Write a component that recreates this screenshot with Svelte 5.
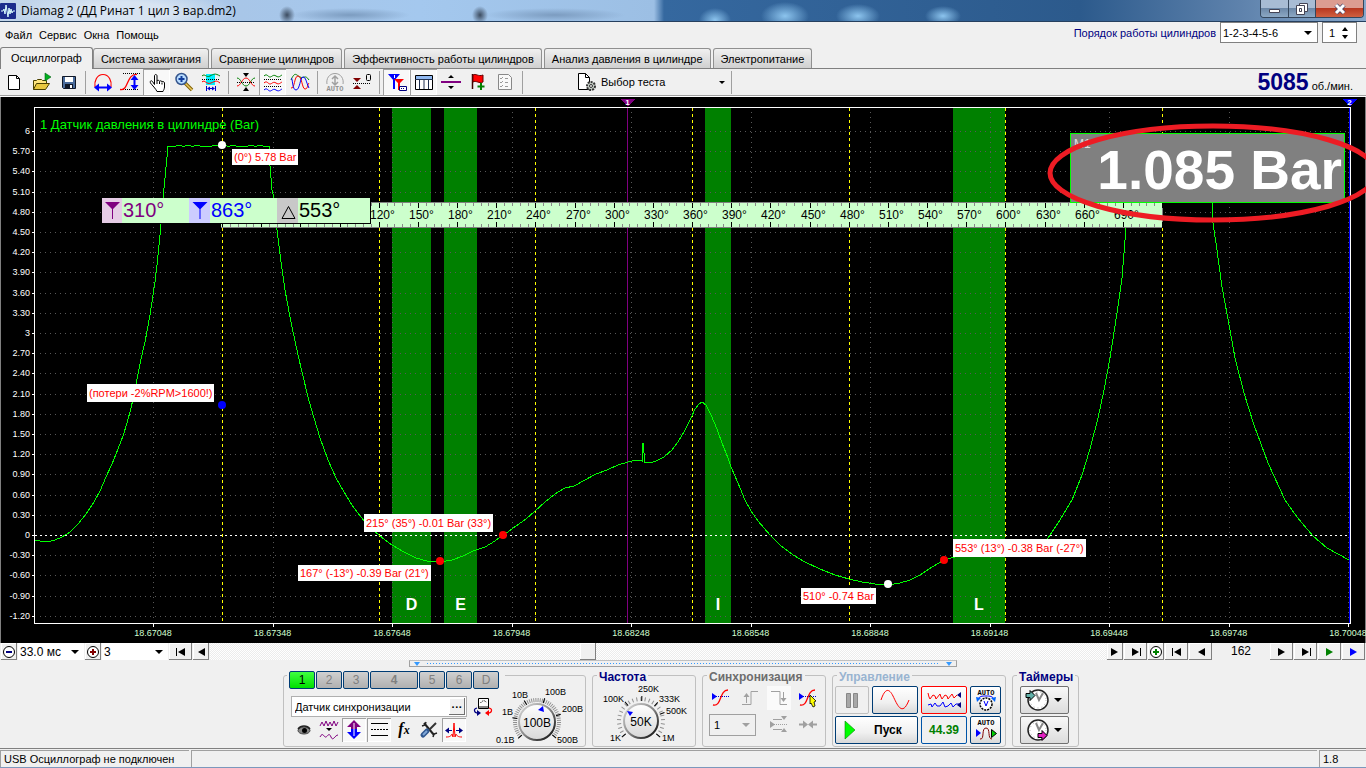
<script lang="ts">
	type Note = { x: number; y: number; text: string; tall?: boolean };

	const menu = ['Файл', 'Сервис', 'Окна', 'Помощь'];
	const tabs = [
		'Осциллограф',
		'Система зажигания',
		'Сравнение цилиндров',
		'Эффективность работы цилиндров',
		'Анализ давления в цилиндре',
		'Электропитание'
	];
	const tools = [
		['new', 'open', 'save'],
		['period', 'ramp', 'hand', 'zoom', 'measure'],
		['merge', 'split', 'overlay'],
		['auto', 'zero'],
		['cursors', 'table', 'divide', 'flag', 'checklist']
	];
	const pressed = ['hand', 'split', 'cursors', 'table', 'updown', 'levels', 'spread'];
	const channels = ['1', '2', '3', '4', '5', '6', 'D'];
	const channelTools = ['eye', 'waves', 'updown', 'levels', 'fx', 'wrench', 'spread'];

	let width = $state(1366);
	let height = $state(546);

	// x counts run 34..1349, y counts run 108..623 over the plot area
	const sx = (x: number) => 34 + ((x - 34) * (width - 51)) / 1315;
	const sy = (y: number) => 11 + ((y - 108) * (height - 31)) / 515;
	const deg = (d: number) => Math.round(sx(222 + d * 1.3056));
	const bar = (b: number) => Math.round(sy(535 - b * 67.33));

	const levels = Array.from({ length: 25 }, (_, i) => (60 - i * 3) / 10);
	const times = Array.from({ length: 11 }, (_, i) => ({
		x: 153 + i * 119.5,
		label: (18.67048 + i * 0.003).toFixed(5)
	}));
	const strokes = [0, 120, 240, 360, 480, 600, 720];
	const ticks = Array.from({ length: 121 }, (_, i) => i * 6);
	const bands = [
		{ from: 392, to: 431, name: 'D' },
		{ from: 444, to: 477, name: 'E' },
		{ from: 705, to: 731, name: 'I' },
		{ from: 953, to: 1005, name: 'L' }
	];
	const marks = [
		{ x: 222, y: 145, color: '#fff' },
		{ x: 222, y: 405, color: '#00f' },
		{ x: 440, y: 561, color: '#f00' },
		{ x: 503, y: 535, color: '#f00' },
		{ x: 888, y: 584, color: '#fff' },
		{ x: 944, y: 560, color: '#f00' }
	];
	const notes: Note[] = [
		{ x: 232, y: 149, text: '(0°) 5.78 Bar' },
		{ x: 87, y: 384, text: '(потери -2%RPM>1600!)', tall: true },
		{ x: 364, y: 514, text: '215° (35°) -0.01 Bar (33°)', tall: true },
		{ x: 298, y: 565, text: '167° (-13°) -0.39 Bar (21°)' },
		{ x: 801, y: 588, text: '510° -0.74 Bar' },
		{ x: 953, y: 539, text: '553° (13°) -0.38 Bar (-27°)', tall: true }
	];

	const rise = [
		[35, 540], [40, 541], [47, 542], [55, 540], [62, 537], [70, 532], [78, 524], [86, 514], [94, 502],
		[100, 491], [106, 477], [112, 464], [118, 449], [123, 436], [127, 423], [131, 408], [135, 390],
		[138, 374], [141, 359], [145, 342], [150, 315], [155, 282], [157, 265], [160, 235], [163, 198], [165, 178], [168, 146]
	];
	// sensor clips here, only the noise is left
	const clipped = Array.from({ length: 33 }, (_, i) => [170 + i * 3, i % 3 ? 146 : 145 + ((i * 7) % 4 ? 0 : 2)]);
	const rest = [
		[269, 146], [270, 166], [272, 190], [275, 203], [277, 230], [281, 262], [285, 290], [290, 317], [296, 346],
		[302, 372], [308, 397], [314, 418], [320, 438], [328, 460], [336, 478], [344, 492], [352, 505],
		[360, 516], [370, 527], [380, 536], [392, 545], [404, 552], [416, 558], [427, 561], [440, 562],
		[452, 560], [463, 556], [473, 551], [485, 547], [495, 541], [503, 535], [508, 532], [516, 526],
		[526, 519], [535, 511], [545, 502], [555, 494], [565, 488], [574, 486], [585, 480], [596, 474],
		[607, 470], [618, 465], [628, 462], [636, 460], [642, 461], [642, 453], [643, 443], [644, 453],
		[644, 462], [650, 463], [656, 461], [664, 457], [672, 450], [678, 442], [685, 430], [691, 418],
		[695, 409], [699, 404], [702, 402], [706, 405], [711, 415], [717, 429], [722, 443], [728, 458],
		[731, 467], [738, 483], [745, 500], [751, 511], [758, 521], [770, 535], [780, 545], [793, 555],
		[805, 562], [820, 569], [835, 575], [849, 579], [862, 582], [875, 584], [888, 585], [900, 583],
		[910, 580], [920, 575], [932, 567], [944, 560], [955, 557], [1010, 555], [1040, 547], [1048, 538],
		[1060, 520], [1072, 500], [1082, 475], [1090, 449], [1098, 418], [1104, 390], [1110, 358],
		[1117, 313], [1122, 278], [1126, 228], [1128, 203], [1132, 146], [1206, 146], [1212, 203],
		[1213, 223], [1217, 250], [1222, 287], [1230, 330], [1235, 358], [1244, 393], [1254, 425],
		[1268, 463], [1285, 500], [1297, 517], [1313, 536], [1327, 548], [1349, 560]
	];
	const trace = $derived([...rise, ...clipped, ...rest].map(([x, y]) => `${sx(x)},${sy(y)}`).join(' '));

	const spokes = (count: number, from: number, to: number) =>
		Array.from({ length: count }, (_, i) => from + ((to - from) * i) / (count - 1));
</script>

{#snippet icon(name: string)}
	<svg class="icon" viewBox="0 0 20 20" fill="none" aria-hidden="true">
		{#if name === 'new'}
			<path d="M4.5 3.5h8l3 3v11h-11z" fill="#fff" stroke="#000" />
			<path d="M12.5 3.5v3h3" stroke="#000" />
		{:else if name === 'open'}
			<path d="M2.5 17.5v-9h3l1-1h4l1 1h4v3" fill="#ffe680" stroke="#4a4000" />
			<path d="M2.5 17.5l3-6h13l-4 6z" fill="#e8c840" stroke="#4a4000" />
			<path d="M14 1l6 4-6 4z" fill="#00b020" stroke="#006010" stroke-width=".6" />
		{:else if name === 'save'}
			<path d="M4.5 4.5h13v12h-12l-1-1z" fill="#4a6c9c" stroke="#101828" />
			<path d="M7 5h8v5H7z" fill="#fff" />
			<path d="M7 12h8v4H7z" fill="#101828" />
			<path d="M12 13h2v3h-2z" fill="#fff" />
		{:else if name === 'period'}
			<path d="M2 15C1 9 4 2.5 10 2.5S19 9 18 15" stroke="#f00" stroke-width="1.2" />
			<path d="M4 15.5h12" stroke="#00f" stroke-width="2" />
			<path d="M1 15.5l5-4v8zM19 15.5l-5-4v8z" fill="#00f" />
		{:else if name === 'ramp'}
			<path d="M3 1.5h17M1 17.5h17" stroke="#000" stroke-dasharray="1 1" />
			<path d="M0 17.5c9 2 6-16 17-15" stroke="#f00" stroke-width="1.3" />
			<path d="M14.5 6v9" stroke="#00f" stroke-width="2" />
			<path d="M14.5 3l4 5h-8zM14.5 18l4-5h-8z" fill="#00f" />
		{:else if name === 'hand'}
			<path
				d="M7.5 12.5V4c0-2 2.5-2 2.5 0v5c0-1 2.5-1 2.5.5 0-1 2.5-1 2.5.5 0-1 2.5-.5 2.5 1v4c0 2-1 3-1.5 4.5h-6C9 17 5 13 3.5 11c-1-2 1-3 2-1.5z"
				fill="#fff"
				stroke="#000"
			/>
			<path d="M10 9v3M12.5 10v2M15 10.5v2" stroke="#000" />
		{:else if name === 'zoom'}
			<path d="M11 11l7 7" stroke="#806000" stroke-width="3.5" />
			<path d="M11 11l7 7" stroke="#e8c860" stroke-width="1.5" />
			<circle cx="7.5" cy="7" r="5.5" fill="#b8dcff" stroke="#34548c" stroke-width="1.5" />
			<path d="M7.5 4v6M4.5 7h6" stroke="#103c9c" stroke-width="2" />
		{:else if name === 'measure'}
			<path d="M5 2h9v11H5z" fill="#00f0ff" />
			<path d="M1 4c3-3 4 2 8 0s5-3 10 0" stroke="#008000" />
			<path d="M1 7.5h18" stroke="#000" stroke-dasharray="1 1" />
			<path d="M1 10c3-3 4 3 9 1s5-3 9 0" stroke="#f00" />
			<path d="M5.5 14v5M14.5 14v5M7 16.5h6" stroke="#00c" />
			<path d="M6 16.5l3-2v4zM14 16.5l-3-2v4z" fill="#00c" />
		{:else if name === 'merge'}
			<path d="M10 5L7 1h6zM10 15l-3 4h6z" fill="#000" />
			<path d="M1 6c4 0 5 8 9 8s5-8 9-8" stroke="#008000" />
			<path d="M1 14c4 0 5-8 9-8s5 8 9 8" stroke="#f00" />
			<path d="M1 10.5h18" stroke="#000" stroke-dasharray="1 1" />
		{:else if name === 'split'}
			<path d="M1 4c3-3 4 1 6 1s3-3 6-1 4 0 6-1" stroke="#008000" />
			<path d="M1 11c3-3 4 1 6 1s3-3 6-1 4 0 6-1" stroke="#f00" />
			<path d="M1 18c3-3 4 1 6 1s3-3 6-1 4 0 6-1" stroke="#00f" />
			<path d="M1 7.5h18M1 14.5h18" stroke="#000" stroke-dasharray="1 1" />
		{:else if name === 'overlay'}
			<path d="M1 8c4-9 5-5 9-3s5-3 9 3" stroke="#008000" />
			<path d="M1 16C5 17 4 4 8 4s4 13 7 13 2-4 4-6" stroke="#f00" />
			<path d="M1 6c2 0 1 12 5 12s4-13 7-13 3 5 6 11" stroke="#00f" />
		{:else if name === 'auto'}
			<path d="M2 12C1 7 4 1.5 10 1.5S19 7 18 12" stroke="#a0a0a0" />
			<path d="M10 12V4M7 7l3-3 3 3M7 10l3 3 3-3" stroke="#a0a0a0" stroke-width="1.5" />
			<text x="10" y="19" class="tiny" fill="#909090">AUTO</text>
		{:else if name === 'zero'}
			<path d="M5 10L1 6h8zM5 13l-4 4h8z" fill="#800000" />
			<path d="M1 11.5h18" stroke="#000" stroke-dasharray="1 1" />
			<rect x="14.5" y="2.5" width="4" height="6" rx="1" stroke="#000" />
		{:else if name === 'cursors'}
			<path d="M1 2h12l-6 7zM6 8h2v9H6z" fill="#00f" />
			<path d="M7 7h10l-5 5zM11 10h2v8h-2z" fill="#f00" />
			<path d="M7.5 3v3" stroke="#fff" />
			<path d="M12.5 14.5h7v4h-7z" fill="#fff" stroke="#000080" />
			<path d="M14 16.5h4" stroke="#000080" stroke-dasharray="1 1" />
		{:else if name === 'table'}
			<path d="M1.5 3.5h17v14h-17z" fill="#fff" stroke="#000" />
			<path d="M2 4h16v3H2z" fill="#90b8f0" />
			<path d="M1 7.5h18M5.5 7v10M10 7v10M14.5 7v10" stroke="#203050" />
		{:else if name === 'divide'}
			<path d="M0 9h20v2H0z" fill="#800080" />
			<path d="M10 3l3 3H7zM10 17l3-3H7z" fill="#000" />
		{:else if name === 'flag'}
			<path d="M4.5 2v15" stroke="#400000" stroke-width="1.5" />
			<path d="M5 3c3-2 5 2 10 0v7c-4 2-7-2-10 0z" fill="#f00" stroke="#600" />
			<path d="M13 11v7M9.5 14.5h7" stroke="#008000" stroke-width="2" />
		{:else if name === 'checklist'}
			<path d="M3.5 2.5h10l3 3v12h-13z" fill="#f8f8f8" stroke="#888" />
			<path d="M5 6l1 1 2-2M5 10l1 1 2-2M5 14l1 1 2-2M10 6.5h3M10 10.5h3M10 14.5h3" stroke="#999" />
		{:else if name === 'test'}
			<path d="M2.5 1.5h7l4 4v12h-11z" fill="#fff" stroke="#000" />
			<path d="M9.5 1.5v4h4" stroke="#000" />
			<circle cx="15" cy="14" r="4" fill="#c8d0c8" stroke="#333" stroke-width="2" stroke-dasharray="2 1" />
			<circle cx="15" cy="14" r="1.5" fill="#f0f0f0" stroke="#333" />
		{:else if name === 'eye'}
			<ellipse cx="10" cy="10.5" rx="6" ry="3.5" fill="#888" stroke="#444" />
			<path d="M4 9c3-4 9-4 12 0" stroke="#222" stroke-width="1.5" />
			<circle cx="10.5" cy="10.5" r="2.5" fill="#000" />
		{:else if name === 'waves'}
			<path d="M1 6l2-4 2 4 2-5 2 5 2-4 2 4 2-5 2 5 2-4" stroke="#800080" />
			<path d="M10 11L7 8h6z" fill="#000" />
			<path d="M1 17c3-6 4 1 6 0s3-5 5 0 4-2 7-2" stroke="#800080" />
		{:else if name === 'updown'}
			<path d="M10 0l7 7h-4v3H7V7H3z" fill="#800080" />
			<path d="M10 19l7-7h-4V9H7v3H3z" fill="#00f" />
			<path d="M10 3v13" stroke="#fff" />
		{:else if name === 'levels'}
			<path d="M2 3.5h17M2 15.5h17" stroke="#000" />
			<path d="M2 9.5h17" stroke="#000" stroke-dasharray="2 1" />
		{:else if name === 'fx'}
			<text x="10" y="14" class="fx">f<tspan class="sub">x</tspan></text>
		{:else if name === 'wrench'}
			<path d="M5 3l10 12" stroke="#222" stroke-width="2" />
			<path d="M3 6l3-1 1-3M14 17l1-3 3-1" stroke="#222" stroke-width="1.5" />
			<path d="M17 3l-7 7" stroke="#333" stroke-width="2" />
			<path d="M8 11l-4 4" stroke="#305890" stroke-width="5" stroke-linecap="round" />
			<path d="M8 11l-4 4" stroke="#80a8d8" stroke-width="2" />
		{:else if name === 'spread'}
			<path d="M2 17c4 0 5-1 6-3l1 3 1-14 1 14 1-3c1 2 2 3 6 3" stroke="#f00" />
			<path d="M1 10.5l4-3v6zM19 10.5l-4-3v6z" fill="#000080" />
			<path d="M4 10.5h4M12 10.5h4" stroke="#000080" />
		{:else if name === 'swap'}
			<path d="M5.5 1.5h10v10h-10z" fill="#fff" stroke="#000" />
			<path d="M6 9h9v2H6z" fill="#888" />
			<path d="M7.5 6c2-3 5-3 6 0" stroke="#000" stroke-dasharray="1 1" />
			<path d="M4 11c-4 1-3 5 1 5" stroke="#000080" stroke-width="1.2" />
			<path d="M16 11c4 1 3 5-1 5" stroke="#f00" stroke-width="1.2" />
			<path d="M8 16l-4-3v6z" fill="#000080" />
			<path d="M12 16l4-3v6z" fill="#f00" />
		{:else if name === 'sync-level' || name === 'sync-pick'}
			<path d="M1 5l5 3.5-5 3.5z" fill="#00f" />
			<path d="M5 8.5h14" stroke="#00c" stroke-dasharray="1 1" />
			<path d="M2 17c9 2 6-15 15-15" stroke="#f00" stroke-width="1.3" />
			{#if name === 'sync-pick'}
				<path d="M12 7l6 6-2 1 1 4-2 1-2-4-1 1z" fill="#ff0" stroke="#000" stroke-width=".8" />
			{/if}
		{:else if name === 'edge-up'}
			<path d="M2 16.5h9v-13h7M6.5 15V7" stroke="#a0a0a0" />
			<path d="M6.5 5l3 4h-6z" fill="#a0a0a0" />
		{:else if name === 'edge-down'}
			<path d="M2 3.5h9v13h7M14.5 4v7" stroke="#a0a0a0" />
			<path d="M14.5 14l3-4h-6z" fill="#a0a0a0" />
		{:else if name === 'sync-window'}
			<path d="M1 6l5 3.5L1 13z" fill="#a0a0a0" />
			<path d="M4 4.5h9M4 14.5h9" stroke="#a0a0a0" />
			<path d="M5 9.5h13" stroke="#a0a0a0" stroke-dasharray="1 1" />
			<path d="M15 5l-3-4h6zM15 13l-3 4h6z" fill="#a0a0a0" />
		{:else if name === 'squeeze'}
			<path d="M10 9.5l-5-4v8zM10 9.5l5-4v8z" fill="#a0a0a0" />
			<path d="M1 9.5h6M13 9.5h6" stroke="#a0a0a0" stroke-width="2" />
		{/if}
	</svg>
{/snippet}

{#snippet arrow(dir: number, bar: boolean, color: string)}
	<svg class="arrow" viewBox="0 0 14 10" fill={color} aria-hidden="true">
		<g transform={dir < 0 ? 'translate(14 0) scale(-1 1)' : undefined}>
			<path d="M3 1l7 4-7 4z" />
			{#if bar}<path d="M11 1h1v8h-1z" />{/if}
		</g>
	</svg>
{/snippet}

{#snippet caret()}
	<svg class="caret" viewBox="0 0 8 4" aria-hidden="true"><path d="M0 0h8L4 4z" fill="currentColor" /></svg>
{/snippet}

{#snippet sign(plus: boolean, color: string)}
	<svg class="sign" viewBox="0 0 14 14" fill="none" aria-hidden="true">
		<circle cx="7" cy="7" r="5.5" fill="#fff" stroke="#000" />
		<path d={plus ? 'M4 7h6M7 4v6' : 'M4 7h6'} stroke={color} stroke-width="2" />
	</svg>
{/snippet}

<div class="window">
	<header class="titlebar">
		<svg class="logo" viewBox="0 0 16 16" aria-hidden="true">
			<rect width="16" height="16" rx="1" fill="#1c2c8c" />
			<path d="M1 8h2l1-2 1 5 1-9 2 12 1-9 1 6 1-5 1 4 1-2h2" fill="none" stroke="#dff" />
		</svg>
		<h1>Diamag 2 (ДД Ринат 1 цил 3 вар.dm2)</h1>
		<div class="sysbuttons">
			<button class="min" aria-label="Свернуть"><svg viewBox="0 0 16 12"><path d="M2.5 6.5h10v3h-10z" fill="#fff" stroke="#445" /></svg></button>
			<button class="max" aria-label="Развернуть">
				<svg viewBox="0 0 16 12" fill="#fff" stroke="#445"><path d="M5.5.5h8v8h-8z" /><path d="M2.5 2.5h8v9h-8zM5.5 5.5h2v3h-2z" fill-rule="evenodd" /></svg>
			</button>
			<button class="close" aria-label="Закрыть"><svg viewBox="0 0 16 12"><path d="M4 2l8 8M12 2l-8 8" stroke="#446" stroke-width="4.5" /><path d="M4 2l8 8M12 2l-8 8" stroke="#fff" stroke-width="3" /></svg></button>
		</div>
	</header>

	<div class="menubar">
		<nav>
			{#each menu as item (item)}
				<a href="#menu">{item}</a>
			{/each}
		</nav>
		<div class="order">
			<label for="order">Порядок работы цилиндров</label>
			<span class="combo order-combo">
				<select id="order"><option>1-2-3-4-5-6</option></select>
				{@render caret()}
			</span>
			<span class="spin">
				<input aria-label="Цилиндр" value="1" />
				<svg viewBox="0 0 8 14" aria-hidden="true"><path d="M1 5l3-4 3 4zM1 9l3 4 3-4z" /></svg>
			</span>
		</div>
	</div>

	<div class="tabs" role="tablist">
		{#each tabs as tab, i (tab)}
			<button role="tab" class:active={i === 0} aria-selected={i === 0}>{tab}</button>
		{/each}
	</div>

	<div class="toolbar">
		{#each tools as group, i (i)}
			<div class="tool-group">
				{#each group as tool (tool)}
					<button class="tool" class:pressed={pressed.includes(tool)} aria-label={tool}>
						{@render icon(tool)}
					</button>
				{/each}
			</div>
		{/each}
		<button class="test">
			{@render icon('test')}
			<span>Выбор теста</span>
			{@render caret()}
		</button>
		<output class="rpm"><b>5085</b>об./мин.</output>
	</div>

	<main class="scope" bind:clientWidth={width} bind:clientHeight={height}>
		<svg class="plot" {width} {height} shape-rendering="crispEdges">
			{#each bands as band (band.name)}
				<rect x={sx(band.from)} y="11" width={sx(band.to) - sx(band.from)} height={height - 31} fill="#008000" />
			{/each}

			<g stroke="#585858" stroke-dasharray="1 4">
				{#each levels as level (level)}
					<path d="M40 {bar(level) + 0.5}H{width - 18}" />
				{/each}
				{#each times as time (time.x)}
					<path d="M{Math.round(sx(time.x)) + 0.5} 15V{height - 21}" />
				{/each}
			</g>

			<g stroke="#ff0" stroke-dasharray="3 3">
				{#each strokes as stroke (stroke)}
					<path d="M{deg(stroke) + 0.5} 11V{height - 20}" />
				{/each}
			</g>
			<path d="M35 {bar(0) + 0.5}H{width - 17}" stroke="#fff" stroke-dasharray="2 3" />

			<path d="M{deg(310) + 0.5} 10V{height - 20}" stroke="#800080" />
			<path d="M{width - 16.5} 10V{height - 20}" stroke="#00f" />

			<polyline points={trace} fill="none" stroke="#0f0" />

			<path d="M34.5 {height - 19.5}V10.5H{width - 15.5}V{height - 19.5}H34" fill="none" stroke="#fff" />
			<path d="M0.5 0V{height}M{width - 0.5} 0V{height}" stroke="#808080" />

			{#each levels as level (level)}
				<path d="M32 {bar(level) + 0.5}h3" stroke="#fff" />
				<text class="scale" x="30" y={bar(level) + 3} text-anchor="end">
					{Number.isInteger(level) && level % 3 === 0 ? level : level.toFixed(2)}
				</text>
			{/each}
			{#each times as time (time.x)}
				<path d="M{Math.round(sx(time.x)) + 0.5} {height - 19}v3" stroke="#fff" />
				<text class="scale time" x={sx(time.x)} y={height - 7} text-anchor="middle">{time.label}</text>
			{/each}
			{#each bands as band (band.name)}
				<text class="band" x={(sx(band.from) + sx(band.to)) / 2} y={height - 33} text-anchor="middle">{band.name}</text>
			{/each}
			<text class="channel" x="40" y="32">1 Датчик давления в цилиндре (Bar)</text>

			<path d="M{deg(310) - 7} 2h15l-7 7z" fill="#800080" />
			<text class="flag" x={deg(310) + 0.5} y="8" text-anchor="middle">1</text>
			<path d="M{width - 24} 2h15l-7 7z" fill="#00f" />
			<text class="flag" x={width - 16.5} y="8" text-anchor="middle">2</text>

			<rect x={deg(0) - 1} y="105" width={deg(720) - deg(0) + 1} height="25" fill="#cfc" />
			<path d="M{deg(0) - 1} 105.5H{deg(720)}V130M{deg(0) - 1} 130.5H{deg(720)}" fill="none" stroke="#808080" />
			{#each ticks as tick (tick)}
				{#if tick % 30 === 0}
					<path d="M{deg(tick) + 0.5} 106v5m0 14v5" stroke="#000" />
				{:else}
					<path d="M{deg(tick) + 0.5} 106v3m0 18v3" stroke="#888" />
				{/if}
				{#if tick % 30 === 0 && tick >= 120 && tick < 720}
					<text class="degree" x={deg(tick) - 9} y="122">{tick}°</text>
				{/if}
			{/each}

			{#each marks as mark (mark)}
				<circle cx={sx(mark.x)} cy={sy(mark.y)} r="4" fill={mark.color} shape-rendering="auto" />
			{/each}
		</svg>

		{#each notes as note (note.text)}
			<span class="note" class:tall={note.tall} style="left: {sx(note.x)}px; top: {sy(note.y)}px">{note.text}</span>
		{/each}

		<div class="readout">
			<svg class="violet" viewBox="0 0 20 25"><path d="M3 4h15l-7 7v10h-1V11z" fill="#800080" /></svg>
			<span class="violet-text">310°</span>
			<svg class="blue" viewBox="0 0 20 25"><path d="M3 4h15l-7 7v10h-1V11z" fill="#00f" /></svg>
			<span class="blue-text">863°</span>
			<svg class="gray" viewBox="0 0 20 25"><path d="M4.5 20.5h13l-6.5-12z" fill="none" stroke="#000" /></svg>
			<span>553°</span>
		</div>

		<div class="meter">
			<small>M1</small>
			<strong>1.085 Bar</strong>
		</div>
		<svg class="circled" viewBox="0 0 320 104" aria-hidden="true">
			<ellipse cx="167" cy="51" rx="163" ry="47" fill="none" stroke="#ed1c24" stroke-width="5" />
		</svg>
	</main>

	<div class="transport">
		<button class="step" aria-label="Уменьшить">{@render sign(false, '#000080')}</button>
		<span class="combo flat"><select aria-label="Развёртка"><option>33.0 мс</option></select>{@render caret()}</span>
		<button class="step" aria-label="Увеличить">{@render sign(true, '#800000')}</button>
		<span class="combo flat"><select aria-label="Масштаб"><option>3</option></select>{@render caret()}</span>
		<button class="skip" aria-label="В начало">{@render arrow(-1, true, '#000')}</button>
		<button class="step" aria-label="Назад">{@render arrow(-1, false, '#000')}</button>
		<input class="scroll" type="range" min="0" max="1000" value="420" aria-label="Прокрутка" />
		<button class="step" aria-label="Вперёд">{@render arrow(1, false, '#000')}</button>
		<button class="skip" aria-label="В конец">{@render arrow(1, true, '#000')}</button>
		<button class="step" aria-label="Добавить">{@render sign(true, '#008000')}</button>
		<button class="skip" aria-label="Первый кадр">{@render arrow(-1, true, '#000')}</button>
		<button class="skip" aria-label="Предыдущий кадр">{@render arrow(-1, false, '#000')}</button>
		<output class="frame">162</output>
		<button class="skip" aria-label="Следующий кадр">{@render arrow(1, false, '#000')}</button>
		<button class="skip" aria-label="Последний кадр">{@render arrow(1, true, '#000')}</button>
		<button class="skip" aria-label="Воспроизвести">{@render arrow(1, false, '#008000')}</button>
		<button class="skip" aria-label="Воспроизвести всё">{@render arrow(1, false, '#00f')}</button>
	</div>

	<div class="splitter"><i></i><span></span><i></i></div>

	<div class="panel">
		<section class="box channel-box">
			<div class="channels">
				{#each channels as channel, i (channel)}
					<button class:on={i === 0} class:wide={channel === '4'}>{channel}</button>
				{/each}
			</div>
			<div class="channel-body">
				<div class="channel-left">
					<div class="sensor">
						<span class="field">
							<input aria-label="Датчик" value="Датчик синхронизации" />
							<button aria-label="Выбрать датчик">···</button>
						</span>
						<button class="small" aria-label="swap">{@render icon('swap')}</button>
					</div>
					<div class="channel-tools">
						{#each channelTools as tool (tool)}
							<button class="small" class:pressed={pressed.includes(tool)} aria-label={tool}>{@render icon(tool)}</button>
						{/each}
					</div>
				</div>
				<label class="knob">
					<svg viewBox="0 0 90 66" aria-hidden="true">
						<g transform="translate(42 37)">
							{#each spokes(48, -220, 40) as a (a)}
								<path transform="rotate({a})" d="M20 0h4" stroke="#909090" />
							{/each}
							{#each [-221, -170, -121, -72, -18, 40] as a (a)}
								<path transform="rotate({a})" d="M20 0h5" stroke="#000" />
							{/each}
							<circle r="18" fill="url(#dial)" stroke="url(#rim)" stroke-width="2" />
							<path d="M1-12l5-4 1 6z" fill="#00f" />
							<text class="value" y="5">100B</text>
						</g>
						<text x="17" y="13">10B</text>
						<text x="50" y="10">100B</text>
						<text x="67" y="27">200B</text>
						<text x="62" y="58">500B</text>
						<text x="1" y="58">0.1B</text>
						<text x="7" y="30">1B</text>
					</svg>
					<input type="range" min="0" max="5" value="3" aria-label="Чувствительность" />
				</label>
			</div>
		</section>

		<section class="box freq-box">
			<h2>Частота</h2>
			<label class="knob">
				<svg viewBox="0 0 90 66" aria-hidden="true">
					<defs>
						<linearGradient id="dial" x2="0" y2="1"><stop stop-color="#fff" /><stop offset="1" stop-color="#d8d8d8" /></linearGradient>
						<linearGradient id="rim" x2="1" y2="1"><stop stop-color="#ddd" /><stop offset=".5" stop-color="#888" /><stop offset="1" stop-color="#000" /></linearGradient>
					</defs>
					<g transform="translate(43 41)">
						{#each spokes(25, -220, 40) as a (a)}
							<path transform="rotate({a})" d="M20 0h4" stroke="#909090" />
						{/each}
						{#each [-220, -130, -88, -48, -20, 40] as a (a)}
							<path transform="rotate({a})" d="M20 0h5" stroke="#000" />
						{/each}
						<circle r="17" fill="url(#dial)" stroke="url(#rim)" stroke-width="2" />
						<path d="M-14-10l6 1-3 4z" fill="#00f" />
						<text class="value" y="5">50K</text>
					</g>
					<text x="40" y="12">250K</text>
					<text x="5" y="22">100K</text>
					<text x="61" y="22">333K</text>
					<text x="68" y="34">500K</text>
					<text x="12" y="61">1K</text>
					<text x="64" y="61">1M</text>
				</svg>
				<input type="range" min="0" max="6" value="1" aria-label="Частота" />
			</label>
		</section>

		<section class="box sync-box">
			<h2>Синхронизация</h2>
			<div class="sync-grid">
				<button class="small" aria-label="Уровень">{@render icon('sync-level')}</button>
				<button class="small" aria-label="По фронту">{@render icon('edge-up')}</button>
				<button class="small lit" aria-label="По спаду">{@render icon('edge-down')}</button>
				<button class="small" aria-label="Выбор уровня">{@render icon('sync-pick')}</button>
				<span class="combo sync-combo">
					<select aria-label="Канал синхронизации"><option>1</option></select>
					{@render caret()}
				</span>
				<button class="small" aria-label="Окно">{@render icon('sync-window')}</button>
				<button class="small" aria-label="Сжать">{@render icon('squeeze')}</button>
			</div>
		</section>

		<section class="box control-box">
			<h2>Управление</h2>
			<div class="control-grid">
				<button class="big muted" aria-label="Пауза">
					<svg viewBox="0 0 20 20"><path d="M4.5 3.5h4v14h-4zM11.5 3.5h4v14h-4z" fill="#a8a8a8" stroke="#888" /></svg>
				</button>
				<button class="big" aria-label="Синус">
					<svg class="long" viewBox="0 0 36 22" fill="none"><path d="M4 11C8-1 12-1 16 7s9 22 16 4" stroke="#f00" /></svg>
				</button>
				<button class="big red" aria-label="Осциллограммы">
					<svg class="long" viewBox="0 0 36 22" fill="none">
						<path d="M2 4l1 4 1 2 3-4 2 1 1 3 4-5 1 3 1 2 3-4 2 1 1 3 4-5 2 4 3-3" stroke="#f00" />
						<path d="M2 16l3-1 1 3 3-4 2 3 3 0 3-4 2 5 3-1 3-3 2 4 3-3h3" stroke="#00f" />
						<path d="M35 3v6l-4-3zM35 13v6l-4-3z" fill="#000080" />
					</svg>
				</button>
				<button class="big" aria-label="Автовольт">
					<svg class="square" viewBox="0 0 26 26" fill="none">
						<text x="13" y="8" class="tiny dark">AUTO</text>
						<path d="M5 13c1-4 4-4 8-4s7 0 8 4" stroke="#00f" />
						<circle cx="13" cy="17" r="6" fill="#fff" stroke="#000" stroke-width="1.5" stroke-dasharray="2 1" />
						<path d="M11 14l2 5 2-5" stroke="#00f" />
						<path d="M3 10l5 1-4 4zM23 10l-5 1 4 4z" fill="#06f" />
					</svg>
				</button>
				<button class="big start">
					<svg viewBox="0 0 20 20"><path d="M5 1l10 9-10 9z" fill="#0f0" stroke="#080" stroke-width=".6" /></svg>
					<span>Пуск</span>
				</button>
				<output class="big load">44.39</output>
				<button class="big" aria-label="Автосинхронизация">
					<svg class="square" viewBox="0 0 26 26" fill="none">
						<text x="13" y="8" class="tiny dark">AUTO</text>
						<path d="M7 22c5 1 1-11 6-11s1 11 6 11" stroke="#800000" />
						<path d="M3 12l5 4-5 4z" fill="#00f" />
						<path d="M18.5 12.5l5 4-5 4z" fill="#0c0" stroke="#000" />
					</svg>
				</button>
			</div>
		</section>

		<section class="box timer-box">
			<h2>Таймеры</h2>
			{#each ['#60b0a8', '#e020c0'] as color, i (color)}
				<button class="timer" aria-label="Таймер {i + 1}">
					<svg viewBox="0 0 26 24" aria-hidden="true">
						<circle cx="13" cy="12" r="10" fill="#fff" stroke="#222" stroke-width="1.5" />
						<circle cx="13" cy="12" r="8" fill="none" stroke="#aaa" stroke-dasharray="1 3" />
						<path d="M11 5l3 7 4-7" fill="none" stroke="#888" stroke-width="2" />
						<path transform={i ? 'translate(12 11)' : 'translate(0 1)'} d="M1 4.5h4v-3l5 5-5 5v-3H1z" fill={color} stroke="#000" />
					</svg>
					{@render caret()}
				</button>
			{/each}
		</section>
	</div>

	<footer class="status">
		<span class="message">USB Осциллограф не подключен</span>
		<span class="filler"></span>
		<span class="version">1.8</span>
	</footer>
</div>

<style>
	:global(body) {
		background: #f0f0f0;
	}

	.window {
		display: flex;
		flex-direction: column;
		min-height: 100vh;
		font: 11px/14px 'Liberation Sans', Arial, sans-serif;
		color: #000;
	}

	button,
	select,
	input {
		margin: 0;
		padding: 0;
		border: 0;
		border-radius: 0;
		background: none;
		font: inherit;
		color: inherit;
	}

	h1,
	h2 {
		margin: 0;
		font: inherit;
	}

	.icon {
		display: block;
		width: 20px;
		height: 20px;
	}

	.tiny {
		font: bold 7px 'Liberation Mono', monospace;
		text-anchor: middle;
	}

	.dark {
		fill: #000;
	}

	.fx {
		font: italic bold 16px 'Liberation Serif', serif;
		text-anchor: middle;
		fill: #000;
	}

	.sub {
		font-size: 12px;
	}

	.titlebar {
		display: flex;
		align-items: center;
		height: 21px;
		border-bottom: 1px solid #26405f;
		background:
			radial-gradient(ellipse 110px 24px at 125px 12px, #d8e4f2 40%, transparent 100%),
			radial-gradient(ellipse 16px 12px at 715px 20px, #8cc4ee, transparent),
			radial-gradient(ellipse 24px 14px at 785px 16px, #8cc4ee, transparent),
			radial-gradient(ellipse 22px 12px at 858px 16px, #8cc4ee, transparent),
			radial-gradient(ellipse 18px 10px at 943px 16px, #8cc4ee, transparent),
			radial-gradient(ellipse 8px 9px at 287px 15px, #3c4c60, transparent),
			radial-gradient(ellipse 60px 7px at 350px 15px, #7c9cc0, transparent),
			radial-gradient(ellipse 8px 9px at 480px 15px, #3c4c60, transparent),
			radial-gradient(ellipse 70px 7px at 555px 15px, #7c9cc0, transparent),
			linear-gradient(90deg, #c2d5ea 0, #a8c6e8 240px, #a4c8ee 420px, #9cbfe4 654px, #35689f 664px, #2c5a8c 1080px, #5e82ac 1240px, #88a8cc);
	}

	.logo {
		width: 16px;
		height: 16px;
	}

	.titlebar h1 {
		flex: 1;
		margin-left: 5px;
		font: 12px/16px 'Noto Sans', 'Open Sans', sans-serif;
		font-family: 'Open Sans', sans-serif;
	}

	.sysbuttons {
		display: flex;
		align-self: flex-start;
		margin-right: 2px;
		border: 1px solid #34465c;
		border-top: 0;
		border-radius: 0 0 4px 4px;
		overflow: hidden;
	}

	.sysbuttons button {
		display: grid;
		place-items: center;
		width: 28px;
		height: 17px;
		border-right: 1px solid #34465c;
		background: linear-gradient(#a8bcd4 45%, #6c88a8 50%, #8ca8c4);
	}

	.sysbuttons .max {
		width: 27px;
	}

	.sysbuttons .close {
		width: 47px;
		border-right: 0;
		background: linear-gradient(#dc9c90 45%, #b83820 50%, #d06040);
	}

	.sysbuttons svg {
		width: 16px;
		height: 12px;
	}

	.menubar {
		display: flex;
		justify-content: space-between;
		height: 25px;
	}

	.menubar nav {
		display: flex;
		align-items: center;
		gap: 7px;
		padding-left: 5px;
	}

	.menubar a {
		color: #000;
		text-decoration: none;
	}

	.order {
		display: flex;
		align-items: center;
		gap: 4px;
		padding: 0 9px 4px 0;
	}

	.order label {
		color: #000080;
	}

	.combo {
		display: grid;
		align-items: center;
		background: #fff;
	}

	.combo > select,
	.combo > .caret {
		grid-area: 1 / 1;
	}

	.combo > select {
		appearance: none;
		width: 100%;
		height: 100%;
		padding-left: 2px;
		outline: 0;
	}

	.caret {
		width: 8px;
		height: 4px;
	}

	.combo > .caret {
		justify-self: end;
		margin-right: 5px;
		pointer-events: none;
	}

	.order-combo {
		width: 96px;
		height: 19px;
		border: 1px solid #808080;
	}

	.spin {
		display: flex;
		align-items: center;
		width: 33px;
		height: 19px;
		border: 1px solid #808080;
		background: #fff;
	}

	.spin input {
		width: 12px;
		padding-left: 6px;
	}

	.spin svg {
		width: 8px;
		height: 14px;
	}

	.tabs {
		display: flex;
		align-items: flex-end;
		gap: 2px;
		height: 21px;
	}

	.tabs button {
		height: 20px;
		padding: 0 7px;
		border: 1px solid #909090;
		border-bottom: 0;
		border-radius: 3px 3px 0 0;
		background: linear-gradient(#f0f0f0, #d0d0d0);
	}

	.tabs .active {
		height: 22px;
		margin: 0 -2px -1px 0;
		padding: 0 10px 2px;
		border-color: #808080;
		background: #f0f0f0;
		z-index: 1;
	}

	.toolbar {
		display: flex;
		align-items: center;
		height: 26px;
		border-top: 1px solid #808080;
		border-bottom: 1px solid #a0a0a0;
	}

	.tool-group {
		display: flex;
	}

	.tool-group::after {
		content: '';
		align-self: center;
		width: 1px;
		height: 23px;
		margin: 0 3px 0 4px;
		background: #a0a0a0;
	}

	.tool {
		display: grid;
		place-items: center;
		width: 27px;
		height: 26px;
	}

	.pressed {
		background: #f8f8f8;
		box-shadow: inset 1px 1px #a0a0a0, inset -1px -1px #fff;
	}

	.test {
		display: flex;
		align-items: center;
		width: 183px;
		height: 23px;
		margin-left: 23px;
		padding: 0 6px 0 27px;
		border-right: 1px solid #a0a0a0;
	}

	.test span {
		flex: 1;
		margin-left: 5px;
		text-align: left;
	}

	.test .caret {
		width: 6px;
		height: 3px;
	}

	.rpm {
		display: flex;
		align-items: baseline;
		gap: 3px;
		margin-left: auto;
		padding-right: 13px;
	}

	.rpm b {
		font-size: 23px;
		line-height: 24px;
		color: #000080;
	}

	.scope {
		position: relative;
		flex: 1;
		min-height: 300px;
		overflow: hidden;
		border-top: 1px solid #fff;
		background: #000;
	}

	.plot {
		display: block;
	}

	.scale {
		font-size: 9px;
		fill: #fff;
	}

	.time {
		fill: #d0ffd0;
	}

	.band {
		font-size: 16px;
		font-weight: bold;
		fill: #fff;
	}

	.channel {
		font-size: 13px;
		fill: #0f0;
	}

	.flag {
		font-size: 8px;
		font-weight: bold;
		fill: #fff;
	}

	.degree {
		font-size: 12px;
		fill: #000;
	}

	.note {
		position: absolute;
		padding: 1px 2px;
		background: #fff;
		color: #f00;
		white-space: nowrap;
	}

	.tall {
		padding: 2px;
	}

	.readout {
		position: absolute;
		left: 102px;
		top: 101px;
		display: grid;
		grid-template-columns: 20px 67px 21px 67px 21px 72px;
		align-items: center;
		border-right: 1px solid #000;
		border-bottom: 1px solid #000;
		background: #cfc;
		font-size: 20px;
		line-height: 25px;
	}

	.readout svg {
		width: 100%;
		height: 25px;
	}

	.readout span {
		padding-left: 1px;
	}

	.violet {
		background: #e6cce6;
	}

	.blue {
		background: #ccf;
	}

	.gray {
		background: #c8c8c8;
	}

	.violet-text {
		color: #800080;
	}

	.blue-text {
		color: #00f;
	}

	.meter {
		position: absolute;
		right: 21px;
		top: 36px;
		display: flex;
		justify-content: space-between;
		width: 268px;
		height: 68px;
		padding: 0 2px 0 3px;
		border: 1px solid #0f0;
		background: #808080;
		color: #fff;
	}

	.meter small {
		margin-top: 3px;
		font-size: 12px;
		color: #e0e0e0;
	}

	.meter strong {
		font-size: 55px;
		line-height: 72px;
	}

	.circled {
		position: absolute;
		right: 0;
		top: 25px;
		width: 320px;
		height: 104px;
	}

	.transport {
		display: flex;
		gap: 1px;
		height: 17px;
		padding: 0 1px;
	}

	.transport button {
		display: grid;
		place-items: center;
		width: 16px;
		box-shadow: inset -1px -1px #808080, inset 1px 1px #fff;
	}

	.transport .skip {
		width: 23px;
	}

	.arrow {
		width: 14px;
		height: 10px;
	}

	.sign {
		width: 14px;
		height: 14px;
	}

	.flat {
		width: 66px;
		font-size: 12px;
	}

	.scroll {
		flex: 1;
		min-width: 0;
		appearance: none;
		background: repeating-conic-gradient(#fff 0 25%, #ececec 0 50%) 0 0 / 2px 2px;
	}

	.scroll::-webkit-slider-thumb {
		appearance: none;
		width: 16px;
		height: 17px;
		background: #f0f0f0;
		box-shadow: inset -1px -1px #808080, inset 1px 1px #fff;
	}

	.frame {
		width: 56px;
		text-align: center;
		font-size: 12px;
		line-height: 17px;
	}

	.splitter {
		display: flex;
		align-items: center;
		align-self: center;
		gap: 3px;
		width: 40%;
		height: 5px;
		border: 1px solid #a0a0a0;
		border-top-color: #c0c0c0;
	}

	.splitter span {
		flex: 1;
		height: 1px;
		background: repeating-linear-gradient(90deg, #3399ff 0 1px, transparent 1px 3px);
	}

	.splitter i {
		margin: 0 4px;
		border: 3px solid transparent;
		border-top: 4px solid #3399ff;
		border-bottom: 0;
	}

	.panel {
		display: flex;
		justify-content: center;
		gap: 6px;
		padding: 8px 4px 1px 0;
		border-bottom: 1px solid #808080;
	}

	.box {
		box-sizing: border-box;
		height: 72px;
		border: 1px solid #c0c0c0;
		border-radius: 3px;
	}

	.box h2 {
		width: max-content;
		height: 14px;
		margin: -6px 0 0 4px;
		padding: 0 2px;
		background: #f0f0f0;
		font-weight: bold;
		font-size: 12px;
		color: #000080;
	}

	.channel-box {
		width: 303px;
	}

	.freq-box {
		width: 104px;
	}

	.sync-box {
		width: 124px;
	}

	.control-box {
		width: 174px;
	}

	.timer-box {
		width: 67px;
	}

	.box.sync-box h2 {
		color: #6d6d6d;
	}

	.box.control-box h2 {
		color: #99b4d1;
	}

	.channels {
		display: flex;
		gap: 1px;
		width: max-content;
		margin: -5px 0 0 3px;
		padding: 0 6px 0 2px;
		background: #f0f0f0;
	}

	.channels button {
		width: 26px;
		height: 18px;
		border: 1px solid #003c74;
		border-radius: 2px;
		background: linear-gradient(#d0d0d0, #b0b0b0);
		font-size: 12px;
		color: #808080;
	}

	.channels .wide {
		width: 48px;
		font-weight: bold;
	}

	.channels .on {
		background: linear-gradient(#40ff40, #00e000);
		color: #000;
	}

	.channel-body {
		display: flex;
		justify-content: space-between;
		margin-top: -4px;
	}

	.channel-left {
		padding: 11px 0 0 7px;
	}

	.sensor {
		display: flex;
		gap: 4px;
	}

	.field {
		display: flex;
		align-items: center;
		width: 174px;
		height: 19px;
		border: 1px solid #b0b0b0;
		background: #fff;
	}

	.field input {
		flex: 1;
		min-width: 0;
		padding-left: 3px;
	}

	.field button {
		width: 16px;
		height: 17px;
		margin-right: 1px;
		background: #f0f0f0;
		box-shadow: inset -1px -1px #707070, inset 1px 1px #fff;
		font-weight: bold;
	}

	.small {
		display: grid;
		place-items: center;
		width: 24px;
		height: 24px;
	}

	.sensor .small {
		height: 21px;
	}

	.channel-tools {
		display: flex;
		gap: 1px;
		margin-top: 1px;
		padding-left: 1px;
	}

	.knob {
		position: relative;
		display: block;
		width: 90px;
		height: 66px;
	}

	.knob svg {
		width: 90px;
		height: 66px;
		font-size: 9px;
	}

	.knob .value {
		font-size: 12px;
		text-anchor: middle;
	}

	.knob input {
		position: absolute;
		inset: 0;
		width: 100%;
		height: 100%;
		opacity: 0;
	}

	.freq-box .knob {
		margin: -4px 0 0 5px;
	}

	.sync-grid {
		display: grid;
		grid-template-columns: 24px 24px 24px 24px;
		justify-content: space-between;
		align-items: center;
		row-gap: 3px;
		padding: 2px 5px 0 6px;
	}

	.lit {
		background: #fafafa;
	}

	.sync-combo {
		grid-column: span 2;
		width: 45px;
		height: 20px;
		border: 1px solid #a0a0a0;
		background: #f0f0f0;
	}

	.sync-combo .caret {
		color: #a0a0a0;
	}

	.sync-combo select {
		padding-left: 4px;
	}

	.control-grid {
		display: grid;
		grid-template-columns: 34px 46px 46px 31px;
		grid-auto-rows: 28px;
		gap: 2px 3px;
		padding: 2px 2px 0;
	}

	.big {
		display: flex;
		align-items: center;
		justify-content: center;
		border: 1px solid #003c74;
		border-radius: 2px;
		background: linear-gradient(#fff, #f0f0f0 60%, #d8d8d8);
	}

	.big svg {
		width: 20px;
		height: 20px;
	}

	.big .long {
		width: 36px;
		height: 22px;
	}

	.big .square {
		width: 26px;
		height: 26px;
	}

	.muted {
		border-color: #c0c0c0;
		background: #f0f0f0;
	}

	.red {
		border-color: #f00;
	}

	.start {
		grid-column: span 2;
		justify-content: flex-start;
		gap: 14px;
		padding-left: 4px;
		font-weight: bold;
		font-size: 12px;
	}

	.load {
		border-color: #0054a8;
		background: #f0f0f0;
		color: #008000;
		font-weight: bold;
		font-size: 12px;
	}

	.timer {
		display: flex;
		align-items: center;
		justify-content: space-between;
		width: 49px;
		height: 28px;
		margin: 2px 0 0 7px;
		padding: 0 6px 0 4px;
		border: 1px solid #707070;
		border-radius: 2px;
		background: linear-gradient(#f8f8f8, #dcdcdc);
	}

	.timer svg:first-child {
		width: 26px;
		height: 24px;
	}

	.status {
		display: flex;
		gap: 2px;
		height: 17px;
		padding-top: 1px;
		border-bottom: 2px solid #7c98bc;
	}

	.status span {
		padding: 1px 3px;
		border: 1px solid #a0a0a0;
		border-width: 1px 0 0 1px;
	}

	.message {
		width: 182px;
	}

	.filler {
		flex: 1;
	}

	.version {
		width: 40px;
	}
</style>
